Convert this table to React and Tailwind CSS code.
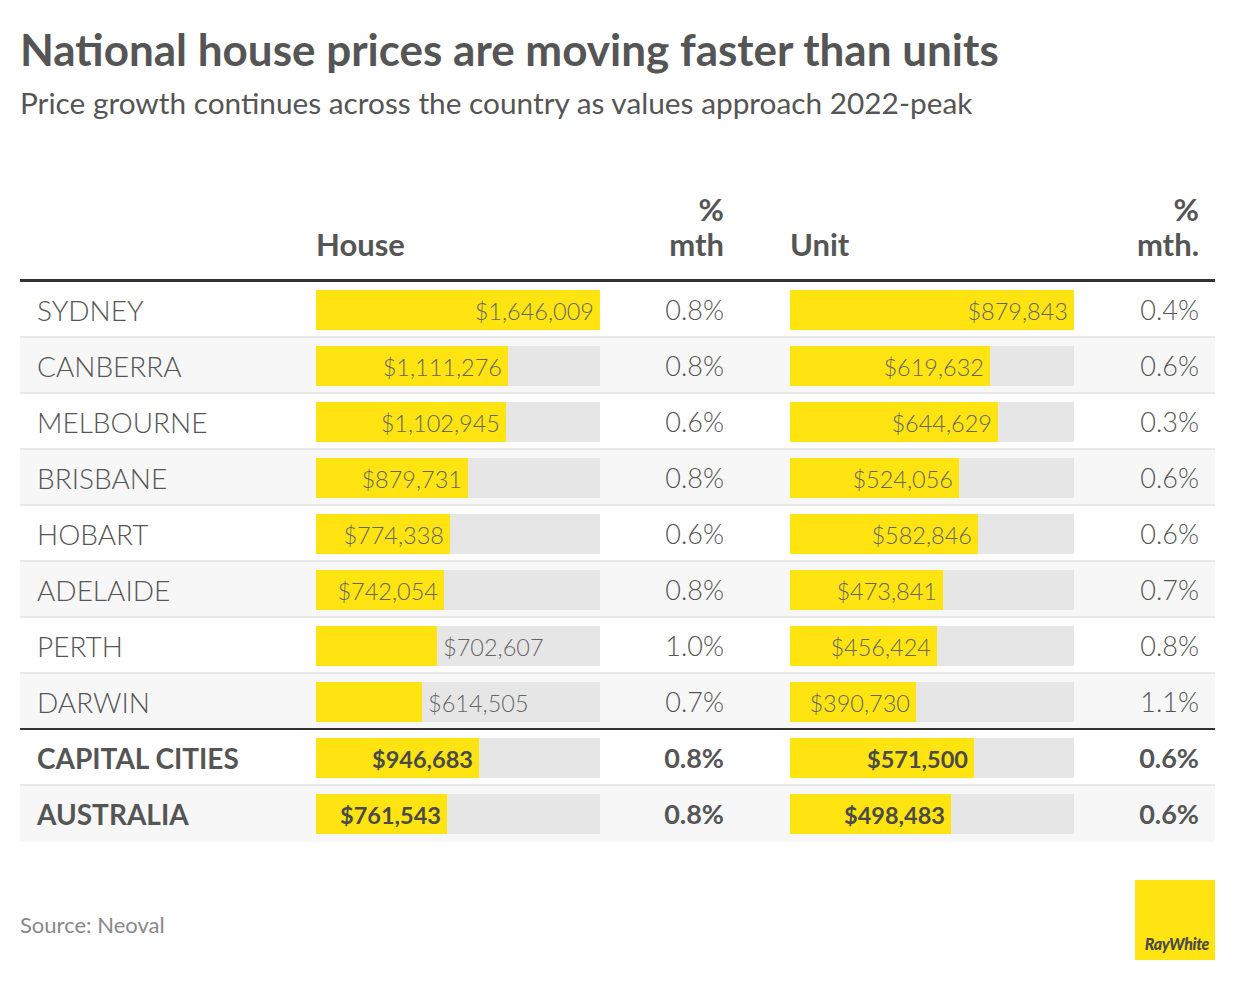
const rows = [
  { city: "SYDNEY", house: 1646009, hp: "0.8%", unit: 879843, up: "0.4%" },
  { city: "CANBERRA", house: 1111276, hp: "0.8%", unit: 619632, up: "0.6%" },
  { city: "MELBOURNE", house: 1102945, hp: "0.6%", unit: 644629, up: "0.3%" },
  { city: "BRISBANE", house: 879731, hp: "0.8%", unit: 524056, up: "0.6%" },
  { city: "HOBART", house: 774338, hp: "0.6%", unit: 582846, up: "0.6%" },
  { city: "ADELAIDE", house: 742054, hp: "0.8%", unit: 473841, up: "0.7%" },
  { city: "PERTH", house: 702607, hp: "1.0%", unit: 456424, up: "0.8%" },
  { city: "DARWIN", house: 614505, hp: "0.7%", unit: 390730, up: "1.1%" },
  { city: "CAPITAL CITIES", house: 946683, hp: "0.8%", unit: 571500, up: "0.6%", bold: true },
  { city: "AUSTRALIA", house: 761543, hp: "0.8%", unit: 498483, up: "0.6%", bold: true },
];

const HOUSE_MAX = 1646009;
const UNIT_MAX = 879843;
const BAR_W = 284;

const fmt = (n) => "$" + n.toLocaleString("en-US");

function Bar({ value, max, bold }) {
  const w = Math.round((value / max) * BAR_W);
  const inside = w >= 124;
  const textCls = bold
    ? "text-[23.5px] font-bold text-[#4a4a4a]"
    : "text-[23.5px] font-light text-[#666]";
  return (
    <div className="flex h-10 w-[284px] bg-[#e6e6e6]">
      <div
        className="flex h-10 shrink-0 items-center justify-end bg-[#ffe412] pr-1.5 pt-[3px]"
        style={{ width: w }}
      >
        {inside && <span className={textCls}>{fmt(value)}</span>}
      </div>
      {!inside && (
        <div className="flex h-10 items-center pl-1.5 pt-[3px]">
          <span className={textCls}>{fmt(value)}</span>
        </div>
      )}
    </div>
  );
}

function Row({ r, i }) {
  const bg = i % 2 === 0 ? "bg-white" : "bg-[#f7f7f7]";
  const border =
    i === 7
      ? "border-b-2 border-[#333]"
      : i === rows.length - 1
      ? ""
      : "border-b-2 border-[#e8e8e8]";
  const name = r.bold
    ? "text-[28px] font-bold text-[#555]"
    : "text-[28px] font-light text-[#555]";
  const pct = r.bold
    ? "text-[27px] font-bold text-[#555]"
    : "text-[27px] font-light text-[#555]";
  return (
    <div className={`flex h-14 items-start pt-2 ${bg} ${border}`}>
      <div className={`flex h-10 w-[296px] items-center pl-[17px] ${name}`}>
        {r.city}
      </div>
      <Bar value={r.house} max={HOUSE_MAX} bold={r.bold} />
      <div className={`flex h-10 w-[124px] items-center justify-end ${pct}`}>
        {r.hp}
      </div>
      <div className="w-[66px]" />
      <Bar value={r.unit} max={UNIT_MAX} bold={r.bold} />
      <div className={`flex h-10 w-[125px] items-center justify-end ${pct}`}>
        {r.up}
      </div>
    </div>
  );
}

export default function App() {
  return (
    <div className="h-[984px] w-[1236px] bg-white px-5 font-[Lato,sans-serif]">
      <h1 className="pt-[27px] text-[44px] font-bold leading-[44px] text-[#555]">
        National house prices are moving faster than units
      </h1>
      <p className="mt-[17px] text-[29.8px] leading-[30px] text-[#555]">
        Price growth continues across the country as values approach 2022-peak
      </p>

      <div className="mt-[74px] w-[1195px]">
        <div className="flex items-end border-b-[3px] border-[#333] pb-[17px] text-[31px] font-bold leading-[35px] text-[#555]">
          <div className="w-[296px]" />
          <div className="w-[284px]">House</div>
          <div className="w-[124px] text-right">
            %
            <br />
            mth
          </div>
          <div className="w-[66px]" />
          <div className="w-[284px]">Unit</div>
          <div className="w-[125px] text-right">
            %
            <br />
            mth.
          </div>
        </div>
        {rows.map((r, i) => (
          <Row key={r.city} r={r} i={i} />
        ))}
      </div>

      <div className="mt-[38px] flex w-[1195px] items-center justify-between">
        <p className="mt-2 text-[22px] text-[#888]">Source: Neoval</p>
        <div className="flex h-20 w-20 items-end justify-end bg-[#ffe412] pb-2 pr-1.5">
          <span className="text-[16px] font-black italic leading-none tracking-tight text-[#4a4a4a]">
            RayWhite
          </span>
        </div>
      </div>
    </div>
  );
}
